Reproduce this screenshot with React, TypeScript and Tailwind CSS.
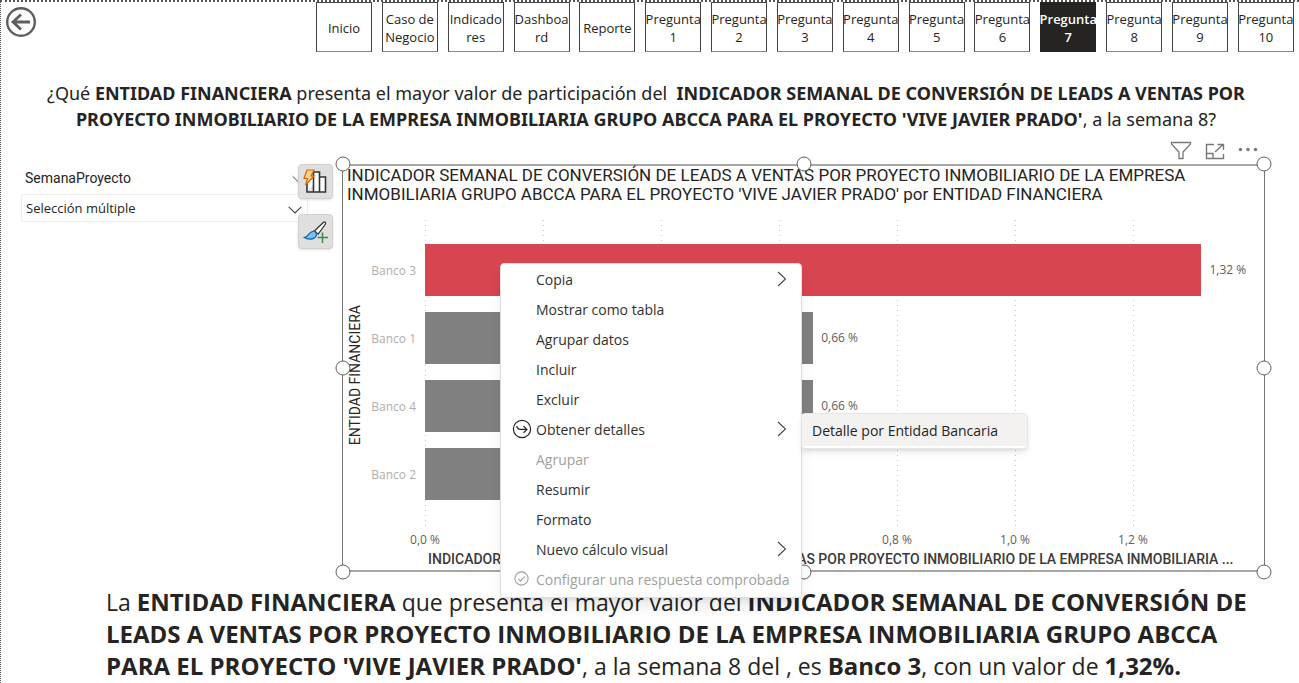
import React from "react";

const NAV = ["Inicio", "Caso de Negocio", "Indicado res", "Dashboa rd", "Reporte", "Pregunta 1", "Pregunta 2", "Pregunta 3", "Pregunta 4", "Pregunta 5", "Pregunta 6", "Pregunta 7", "Pregunta 8", "Pregunta 9", "Pregunta 10"];
const ACTIVE = "Pregunta 7";
const AXIS_MAX = 1.4;
const TICKS = ["0,0 %", "0,2 %", "0,4 %", "0,6 %", "0,8 %", "1,0 %", "1,2 %"];
const BARS = [
  { name: "Banco 3", value: 1.316, label: "1,32 %", color: "bg-[#d64550]" },
  { name: "Banco 1", value: 0.658, label: "0,66 %", color: "bg-[#808080]" },
  { name: "Banco 4", value: 0.658, label: "0,66 %", color: "bg-[#808080]" },
  { name: "Banco 2", value: 0.36, label: "", color: "bg-[#808080]" },
];
const MENU = [
  { text: "Copia", sub: true },
  { text: "Mostrar como tabla" },
  { text: "Agrupar datos" },
  { text: "Incluir" },
  { text: "Excluir" },
  { text: "Obtener detalles", sub: true, icon: "drill" },
  { text: "Agrupar", off: true },
  { text: "Resumir" },
  { text: "Formato" },
  { text: "Nuevo cálculo visual", sub: true },
  { text: "Configurar una respuesta comprobada", off: true, icon: "check" },
];
const HANDLES = [
  "left-0 top-0", "left-1/2 top-0", "left-full top-0",
  "left-0 top-1/2", "left-full top-1/2",
  "left-0 top-full", "left-1/2 top-full", "left-full top-full",
];

function Chevron({ className }: { className: string }) {
  return (
    <svg className={className} viewBox="0 0 14 8" fill="none" stroke="#444" strokeWidth="1.1">
      <path d="M.7.8 7 7 13.3.8" />
    </svg>
  );
}

function MenuIcon({ kind }: { kind?: string }) {
  if (kind === "drill")
    return (
      <svg className="size-5" viewBox="0 0 20 20" fill="none" stroke="#252423" strokeWidth="1.2">
        <circle cx="10" cy="10" r="8.6" />
        <path d="M4.800 7.200c.3 2.200 1.600 3.200 3.600 3.200h6.400M11.500 7l3.400 3.400-3.400 3.400" />
      </svg>
    );
  if (kind === "check")
    return (
      <svg className="size-5" viewBox="0 0 20 20" fill="none" stroke="#a19f9d" strokeWidth="1.1">
        <circle cx="9.500" cy="9.500" r="6.600" />
        <path d="m6.500 9.800 2.100 2.100 4-4.200" />
      </svg>
    );
  return null;
}

export default function App() {
  return (
    <div className="min-h-screen overflow-hidden border-t-2 border-l border-dotted border-[#555] bg-white font-['Open_Sans','Noto_Sans',sans-serif] text-[#252423]">
      <header className="flex items-start">
        <button aria-label="Atrás" className="mt-1 ml-1 size-8">
          <svg viewBox="0 0 32 32" fill="none" stroke="#605e5c" strokeWidth="2.4">
            <circle cx="16" cy="16" r="13.8" />
            <path d="M25 16H8M16 8.500 8 16l8 7.500" strokeWidth="2.800" />
          </svg>
        </button>
        <nav className="mr-[5px] ml-[279px] flex flex-1 justify-between">
          {NAV.map((item) => (
            <button
              key={item}
              className={
                item === ACTIVE
                  ? "flex h-[50px] w-14 items-center justify-center border border-[#252423] bg-[#252423] pt-0.5 text-[13px] leading-[18px] font-semibold text-white"
                  : "flex h-[50px] w-14 items-center justify-center border border-[#444] border-b-[#888] bg-white pt-0.5 text-[13px] leading-[18px]"
              }
            >
              <span className="w-[58px] shrink-0 text-center">{item}</span>
            </button>
          ))}
        </nav>
      </header>

      <h1 className="mt-7 pr-7 pl-5 text-center font-['Noto_Sans',sans-serif] text-[18px] leading-[26px]">
        ¿Qué <b>ENTIDAD FINANCIERA</b> presenta el mayor valor de participación del&nbsp; <b>INDICADOR SEMANAL DE CONVERSIÓN DE LEADS A VENTAS POR<br />
        PROYECTO INMOBILIARIO DE LA EMPRESA INMOBILIARIA GRUPO ABCCA PARA EL PROYECTO 'VIVE JAVIER PRADO'</b>, a la semana 8?
      </h1>

      <main className="mt-8 flex items-start">
        <section className="mt-0.5 ml-5 w-[287px]">
          <div className="flex h-[25px] items-center justify-between pl-1">
            <label htmlFor="semana" className="font-[Roboto,sans-serif] text-[14px]">SemanaProyecto</label>
            <Chevron className="mr-1 h-2 w-3" />
          </div>
          <div className="relative mt-[3px]">
            <select id="semana" className="h-7 w-full appearance-none border border-[#eee] bg-white px-1 pt-0.5 text-[13px]">
              <option>Selección múltiple</option>
            </select>
            <Chevron className="pointer-events-none absolute top-3 right-1.5 h-2 w-3.5" />
          </div>
        </section>
        <div className="z-10 -ml-2.5 flex w-[35px] flex-col gap-[15px]">
          <button aria-label="Tipo de objeto visual" className="flex h-[35px] items-center justify-center rounded-sm border border-[#d2d0ce] bg-[#e1dfdd] shadow">
            <svg className="size-7" viewBox="0 0 28 28" fill="none">
              <path d="M5 13v11h6.500V9M11.500 24V4h6v20M17.500 9h6v15H5" fill="#fff" stroke="#333" strokeWidth="1.6" />
              <path d="M5 2h7l-3 6h3L3.500 17l2-6.500H2z" fill="#ffd08a" stroke="#d8690a" strokeWidth="1.2" />
            </svg>
          </button>
          <button aria-label="Dar formato" className="flex h-[35px] items-center justify-center rounded-sm border border-[#d2d0ce] bg-[#e1dfdd] shadow">
            <svg className="size-7" viewBox="0 0 28 28" fill="none">
              <path d="m12.500 13 9-8.700c1-.9 2.700.4 2 1.700l-7.300 10.200z" fill="#fff" stroke="#333" strokeWidth="1.2" />
              <path d="M2.500 19.500c3.300-.3 4-5 8.300-6.200 2.200-.5 4.300 1.800 3.600 4-1.300 4.500-8.600 4.600-11.900 2.200z" fill="#83beec" stroke="#1267b4" strokeWidth="1.3" />
              <path d="M20.500 14.500v10.500M15.500 19.500h10.500" stroke="#3a8a4d" strokeWidth="1.5" />
            </svg>
          </button>
        </div>

        <section className="relative mr-[34px] ml-[9px] min-w-0 flex-1 border border-t-2 border-b-2 border-[#777] border-t-[#a6a6a6] border-b-[#a6a6a6]">
          <div className="absolute right-0.5 bottom-full mb-1 flex items-center gap-3 text-[#777]">
            <button aria-label="Filtros">
              <svg className="size-[22px]" viewBox="0 0 22 22" fill="none" stroke="currentColor" strokeWidth="1.3">
                <path d="M1.500 2.500h19V4L13 12v6.500H9V12L1.500 4z" />
              </svg>
            </button>
            <button aria-label="Modo de enfoque">
              <svg className="size-[22px]" viewBox="0 0 22 22" fill="none" stroke="currentColor" strokeWidth="1.4">
                <path d="M10 4.500H2.500V18.500h17V14M2.500 13.500h6.500v5M11 12l8-7.500M13.500 4.500h6V10" />
              </svg>
            </button>
            <button aria-label="Más opciones" className="pr-1">
              <svg className="h-[22px] w-5" viewBox="0 0 20 22" fill="currentColor">
                <circle cx="2.500" cy="9.500" r="1.700" /><circle cx="10" cy="9.500" r="1.700" /><circle cx="17.500" cy="9.500" r="1.700" />
              </svg>
            </button>
          </div>

          <h2 className="pl-1 font-[Roboto,sans-serif] text-[17px] leading-[19px] whitespace-nowrap">
            INDICADOR SEMANAL DE CONVERSIÓN DE LEADS A VENTAS POR PROYECTO INMOBILIARIO DE LA EMPRESA<br />
            INMOBILIARIA GRUPO ABCCA PARA EL PROYECTO 'VIVE JAVIER PRADO' por ENTIDAD FINANCIERA
          </h2>

          <div className="mt-4 flex">
            <div className="flex w-6 items-center justify-center">
              <span className="rotate-180 font-[Roboto,sans-serif] text-[14px] leading-4 whitespace-nowrap [writing-mode:vertical-rl]">ENTIDAD FINANCIERA</span>
            </div>
            <div className="flex w-[49px] flex-col gap-4 pt-6 text-right text-[12px] text-[#b0aeac]">
              {BARS.map((b) => (
                <span key={b.name} className="h-[52px] leading-[54px] whitespace-nowrap">{b.name}</span>
              ))}
            </div>
            <div className="relative mr-[13px] ml-[9px] h-[310px] flex-1">
              <div className="absolute inset-0 grid grid-cols-7">
                {TICKS.map((t) => (
                  <div key={t} className="bg-[repeating-linear-gradient(#c8c8c8_0_1px,transparent_1px_5px)] bg-[length:1px_100%] bg-no-repeat" />
                ))}
              </div>
              <div className="relative flex flex-col gap-4 pt-6">
                {BARS.map((b) => (
                  <div key={b.name} className="flex h-[52px] items-center gap-2 text-[12px] text-[#605e5c]">
                    <div className={`h-full shrink-0 ${b.color}`} style={{ width: `${(b.value / AXIS_MAX) * 100}%` }} />
                    <span className="whitespace-nowrap">{b.label}</span>
                  </div>
                ))}
              </div>
            </div>
          </div>
          <div className="mr-[13px] ml-[82px] grid grid-cols-7 text-[12px] leading-5 text-[#605e5c]">
            {TICKS.map((t) => (
              <span key={t} className="w-10 -translate-x-1/2 text-center whitespace-nowrap">{t}</span>
            ))}
          </div>
          <p className="pb-0.5 pl-[85px] font-[Roboto,sans-serif] text-[14px] leading-[18px] font-medium whitespace-nowrap text-[#3b3a39]">
            INDICADOR SEMANAL DE CONVERSIÓN DE LEADS A VENTAS POR PROYECTO INMOBILIARIO DE LA EMPRESA INMOBILIARIA ...
          </p>

          <div className="pointer-events-none absolute inset-x-0 -inset-y-0.5">
            {HANDLES.map((h) => (
              <span key={h} className={`absolute size-[15px] -translate-1/2 rounded-full border border-[#605e5c] bg-white ${h}`} />
            ))}
          </div>

          <div role="menu" className="absolute top-[97px] left-[157px] z-20 w-[302px] rounded-sm border border-[#e1dfdd] bg-white pb-[3px] shadow-lg">
            {MENU.map((m) => (
              <button
                key={m.text}
                role="menuitem"
                disabled={m.off}
                className="flex h-[30px] w-full items-center pr-[13px] pl-[11px] text-left text-[14px] whitespace-nowrap text-[#323130] disabled:text-[#a19f9d]"
              >
                <span className="w-6 shrink-0"><MenuIcon kind={m.icon} /></span>
                <span className="flex-1">{m.text}</span>
                {m.sub && (
                  <svg className="h-4 w-3" viewBox="0 0 12 16" fill="none" stroke="#444" strokeWidth="1.1">
                    <path d="m2 1 7.500 7L2 15" />
                  </svg>
                )}
              </button>
            ))}
          </div>
          <div role="menu" className="absolute top-[247px] left-[458px] z-20 w-[227px] rounded-sm border border-[#e8e6e4] bg-white pb-0.5 shadow-md">
            <button role="menuitem" className="h-8 w-full bg-[#f3f2f1] pl-2.5 text-left text-[14px] whitespace-nowrap">
              Detalle por Entidad Bancaria
            </button>
          </div>
        </section>
      </main>

      <p className="mt-3.5 pl-[105px] text-[23px] leading-8 whitespace-nowrap [&>b]:text-[24px]">
        La <b>ENTIDAD FINANCIERA</b> que presenta el mayor valor del <b>INDICADOR SEMANAL DE CONVERSIÓN DE<br />
        LEADS A VENTAS POR PROYECTO INMOBILIARIO DE LA EMPRESA INMOBILIARIA GRUPO ABCCA<br />
        PARA EL PROYECTO 'VIVE JAVIER PRADO'</b>, a la semana 8 del , es <b>Banco 3</b>, con un valor de <b>1,32%.</b>
      </p>
    </div>
  );
}
